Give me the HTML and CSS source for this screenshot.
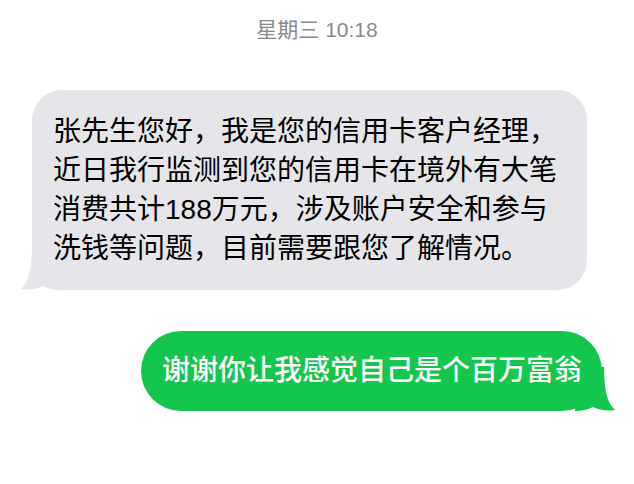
FILE: index.html
```html
<!DOCTYPE html>
<html lang="zh-CN">
<head>
  <meta charset="UTF-8" />
  <meta name="viewport" content="width=device-width, initial-scale=1.0"/>
  <title>信息</title>
  <link rel="stylesheet" href="styles.css">
</head>
<body>
  <div class="chat">
    <div class="time">星期三 10:18</div>

    <!-- incoming -->
    <div class="bubble in">
      <svg class="tail" viewBox="0 0 40 44" width="40" height="44">
        <path d="M11,0 C11,22 8,36 0,43 C8,44.5 16,43 22,40 C27,42.5 33,44 40,44 L40,0 Z"/>
      </svg>
      <span class="text">张先生您好，我是您的信用卡客户经理，<br>
      近日我行监测到您的信用卡在境外有大笔<br>
      消费共计188万元，涉及账户安全和参与<br>
      洗钱等问题，目前需要跟您了解情况。</span>
    </div>

    <!-- outgoing -->
    <div class="bubble out">
      <svg class="tail" viewBox="0 0 40 44" width="40" height="44">
        <path d="M11,0 C11,22 8,36 0,43 C8,44.5 16,43 22,40 C27,42.5 33,44 40,44 L40,0 Z"/>
      </svg>
      <span class="text">谢谢你让我感觉自己是个百万富翁</span>
    </div>
  </div>
</body>
</html>
```

FILE: styles.css
```css
body {
  margin: 0;
  background: #fff;
  font-family: "Liberation Sans", "Noto Sans CJK SC", sans-serif;
}

.chat {
  display: flex;
  flex-direction: column;
  padding-top: 17px;
}

.time {
  text-align: center;
  font-size: 21px;
  line-height: 26px;
  color: #8a8a8e;
  margin-bottom: 47px;
}

.bubble {
  position: relative;
  box-sizing: border-box;
  font-size: 28px;
  white-space: nowrap;
}

.bubble .text {
  position: relative;
}

.bubble .tail {
  position: absolute;
  bottom: 0;
}

/* grey bubble, tail bottom left */
.in {
  align-self: flex-start;
  width: 555px;
  margin-left: 32px;
  padding: 22px 20px 22px 21px;
  line-height: 39px;
  color: #000;
  background: #e5e5ea;
  border-radius: 30px;
}

.in .tail {
  left: -11px;
  fill: #e5e5ea;
}

/* green bubble, tail bottom right */
.out {
  align-self: flex-end;
  margin-top: 41px;
  margin-right: 32px;
  padding: 21px 20px 21px 21px;
  line-height: 38px;
  color: #fff;
  font-weight: 500;
  background: #14c64e;
  border-radius: 40px;
}

.out .tail {
  right: -13px;
  fill: #14c64e;
  transform: scaleX(-1);
}
```
